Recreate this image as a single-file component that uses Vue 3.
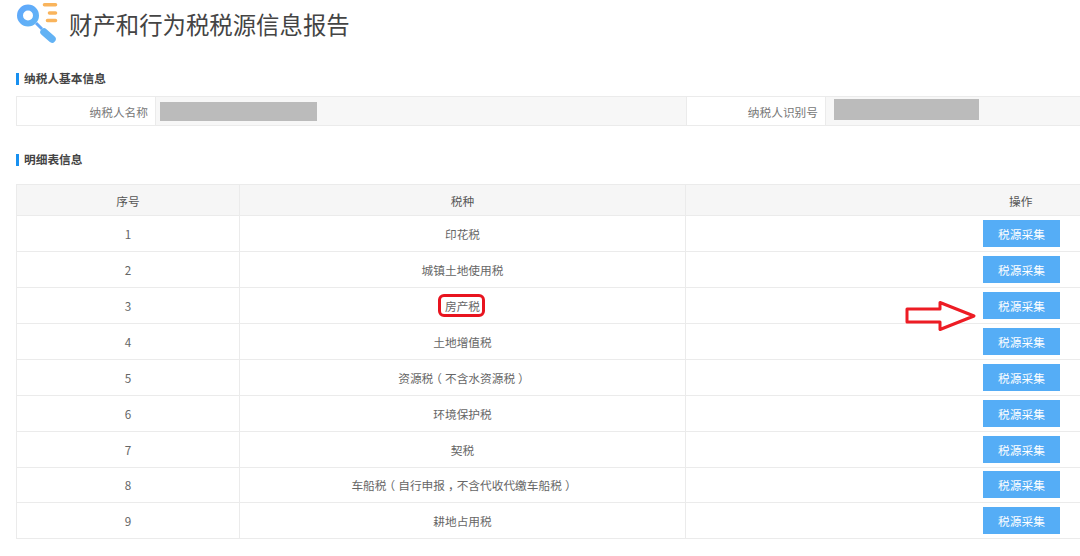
<script setup>
const rows = [
  { n: 1, name: '印花税' },
  { n: 2, name: '城镇土地使用税' },
  { n: 3, name: '房产税', mark: true },
  { n: 4, name: '土地增值税' },
  { n: 5, name: '资源税（不含水资源税）' },
  { n: 6, name: '环境保护税' },
  { n: 7, name: '契税' },
  { n: 8, name: '车船税（自行申报，不含代收代缴车船税）', short: true },
  { n: 9, name: '耕地占用税' }
]
const parts = (s) => s.split(/([（），])/).filter(Boolean).map((t) => ({
  t,
  cls: t === '（' ? 'po' : t === '）' || t === '，' ? 'pc' : ''
}))
</script>

<template>
  <div class="page">
    <header class="head">
      <svg class="logo" width="42" height="44" viewBox="0 0 42 44">
        <defs>
          <linearGradient id="lg" x1="0" y1="0" x2="1" y2="1">
            <stop offset="0" stop-color="#5fa8fb" />
            <stop offset="1" stop-color="#62b4f5" />
          </linearGradient>
        </defs>
        <path d="M28.500 3.700h11M33.500 12h6M31.500 19.500h8" stroke="#f9b45c" stroke-width="3.600" stroke-linecap="round" fill="none" />
        <circle cx="12" cy="14.500" r="8" stroke="url(#lg)" stroke-width="6" fill="#fff" />
        <path d="M20 22l6 6" stroke="#62a8f8" stroke-width="3" fill="none" />
        <path d="M28 31l8 7" stroke="#62b2f4" stroke-width="7.500" stroke-linecap="round" fill="none" />
      </svg>
      <h1 class="title">财产和行为税税源信息报告</h1>
    </header>

    <h2 class="sec first">纳税人基本信息</h2>
    <div class="info">
      <div class="lab">纳税人名称</div>
      <div class="val"><span class="mask a"></span></div>
      <div class="lab">纳税人识别号</div>
      <div class="val"><span class="mask b"></span></div>
    </div>

    <h2 class="sec second">明细表信息</h2>
    <table class="grid">
      <colgroup>
        <col class="c1" />
        <col class="c2" />
        <col class="c3" />
      </colgroup>
      <thead>
        <tr>
          <th>序号</th>
          <th>税种</th>
          <th class="act">操作</th>
        </tr>
      </thead>
      <tbody>
        <tr v-for="r in rows" :key="r.n" :class="{ short: r.short }">
          <td>{{ r.n }}</td>
          <td><span :class="{ mark: r.mark }"><span v-for="(p, i) in parts(r.name)" :key="i" :class="p.cls">{{ p.t }}</span></span></td>
          <td class="act">
            <span class="btnwrap">
              <svg v-if="r.mark" class="arrow" width="74" height="32" viewBox="0 0 74 32">
                <path d="M2 9h33V2.500L69 16 35 29.500V22H2z" fill="#fff" stroke="#ed1c24" stroke-width="3" stroke-linejoin="round" />
              </svg>
              <button class="btn" type="button">税源采集</button>
            </span>
          </td>
        </tr>
      </tbody>
    </table>
  </div>
</template>

<style>
html, body { margin: 0; background: #fff; }
</style>

<style scoped>
.page {
  width: 1080px;
  height: 556px;
  overflow: hidden;
  box-sizing: border-box;
  padding: 0 0 0 16px;
  background: #fff;
  font-family: "Noto Sans CJK SC", "Liberation Sans", sans-serif;
  font-size: 11.700px;
  color: #666;
}
.head {
  display: flex;
  align-items: flex-start;
  height: 44px;
}
.logo { flex: none; margin-top: 1px; }
.title {
  margin: 7px 0 0 11px;
  font-size: 23.400px;
  line-height: 34px;
  font-weight: 400;
  color: #444;
  white-space: nowrap;
}
.sec {
  margin: 0;
  height: 12px;
  line-height: 10px;
  padding-left: 5px;
  border-left: 3px solid #1890f0;
  font-size: 11.700px;
  font-weight: 700;
  color: #444;
}
.sec.first { margin-top: 29px; }
.sec.second { margin-top: 28px; }
.info {
  margin-top: 11px;
  width: 1100px;
  height: 30px;
  box-sizing: border-box;
  border: 1px solid #ebebeb;
  display: grid;
  grid-template-columns: 139px 531px 139px 1fr;
}
.lab {
  text-align: right;
  padding: 2px 7px 0 0;
  line-height: 26px;
  color: #777;
  background: #fff;
  border-right: 1px solid #ebebeb;
}
.val {
  background: #f7f7f7;
  border-right: 1px solid #ebebeb;
}
.mask { display: block; background: #bbb; }
.mask.a { width: 157px; height: 19px; margin: 5px 0 0 4px; }
.mask.b { width: 145px; height: 21px; margin: 2px 0 0 8px; }
.grid {
  margin-top: 18px;
  width: 1120px;
  table-layout: fixed;
  border-collapse: collapse;
}
.c1 { width: 223px; }
.c2 { width: 446px; }
.grid th, .grid td {
  border: 1px solid #ebebeb;
  padding: 0;
  text-align: center;
  vertical-align: middle;
}
.grid th {
  height: 30px;
  background: #f6f6f6;
  font-weight: 400;
  color: #555;
  font-size: 11.700px;
}
.grid td { height: 36px; box-sizing: border-box; color: #666; }
.grid tr.short td { height: 35px; padding-bottom: 1px; }
.grid th.act, .grid td.act { text-align: left; padding-left: 297px; }
.grid th.act { padding-left: 323px; }
.po, .pc {
  display: inline-block;
  text-spacing-trim: space-all;
}
.po { transform: translateX(-3px); }
.pc { transform: translateX(3px); }
.mark { position: relative; display: inline-block; }
.mark::after {
  content: "";
  position: absolute;
  left: -7px;
  right: -5px;
  top: -3px;
  bottom: -3px;
  border: 3px solid #e8141f;
  border-radius: 6px;
}
.btnwrap { position: relative; display: inline-block; vertical-align: middle; }
.btn {
  display: block;
  width: 77px;
  height: 27px;
  padding: 0;
  border: 0;
  border-radius: 0;
  background: #55adf6;
  color: #fff;
  font: inherit;
}
.arrow {
  position: absolute;
  left: -78px;
  top: 8px;
  z-index: 2;
}
</style>
